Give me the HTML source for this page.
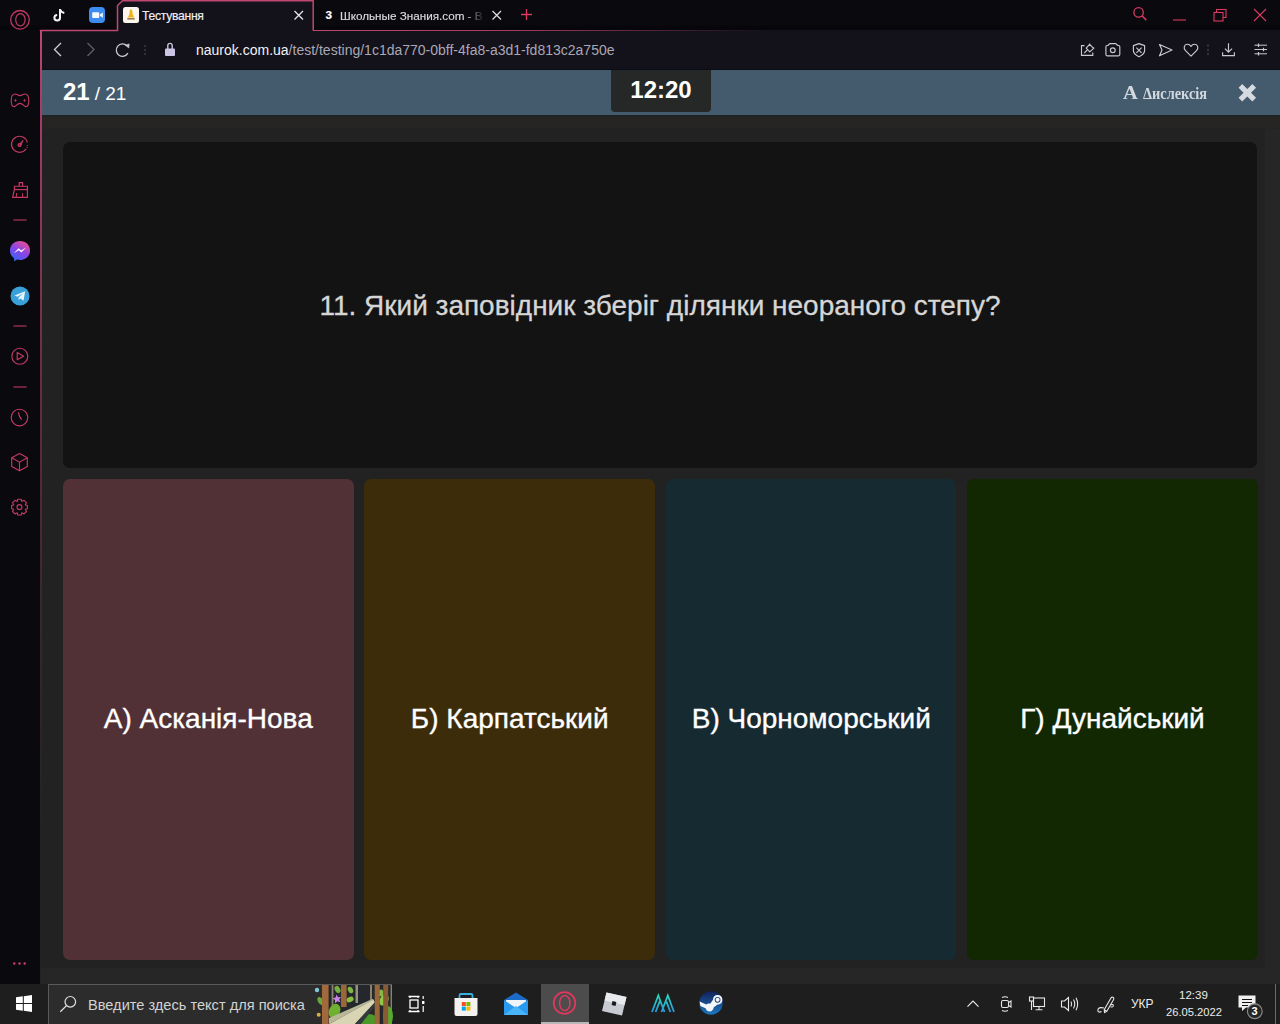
<!DOCTYPE html>
<html><head><meta charset="utf-8">
<style>
*{box-sizing:border-box;margin:0;padding:0}
html,body{width:1280px;height:1024px;overflow:hidden;background:#232323;font-family:"Liberation Sans",sans-serif}
.abs{position:absolute}
svg{position:absolute;overflow:visible}
#tabbar{left:0;top:0;width:1280px;height:30px;background:linear-gradient(#0a090e 0,#0a090e 25px,#07070b 26px,#07070b 30px)}
#addr{left:40px;top:30px;width:1240px;height:40px;background:#13111a}
#side{left:0;top:30px;width:40px;height:954px;background:#0a090d}

#header{left:41px;top:70px;width:1239px;height:45px;background:#445b6e}
#content{left:41px;top:115px;width:1239px;height:869px;background:#262626}
#qbox{left:63px;top:142px;width:1194px;height:326px;background:#131313;border-radius:7px}
.card{top:479px;height:481px;width:290.5px;border-radius:7px;display:flex;align-items:center;justify-content:center;color:#fff;font-size:28px;padding-bottom:2px;-webkit-text-stroke:0.35px #fff}
#taskbar{left:0;top:984px;width:1280px;height:40px;background:#1e1e1e}
.tabtxt{font-size:11.5px;color:#e8e8ee;white-space:nowrap;line-height:14px;-webkit-text-stroke:0.15px currentColor}
</style></head><body>
<div id="tabbar" class="abs"></div>
<div id="addr" class="abs"></div>
<div class="abs" style="left:41px;top:68.5px;width:1239px;height:1.5px;background:#080d16"></div>
<div id="side" class="abs"></div>
<div id="header" class="abs"></div>
<div id="content" class="abs"></div>
<div class="abs" style="left:41px;top:115px;width:1224px;height:853px;background:#222222"></div>
<div class="abs" style="left:41px;top:115px;width:1239px;height:14px;background:linear-gradient(#1d2124 0,#1d2124 1px,#272523 2px,#262422 12px,#232323 14px)"></div>

<div class="abs" style="left:40px;top:30px;width:2px;height:954px;background:linear-gradient(#bd4870 0,#a8406a 60px,#642c42 370px,#3c2630 570px,rgba(40,30,35,0) 800px)"></div>
<div class="abs" style="left:313px;top:29.5px;width:460px;height:1.5px;background:linear-gradient(90deg,#bd4870 0,#a83a60 200px,rgba(120,40,70,0) 450px)"></div>
<!-- active tab -->
<div class="abs" style="left:118px;top:1px;width:195px;height:30px;background:#13111a;clip-path:polygon(5px 0,100% 0,100% 100%,0 100%,0 5px)"></div>
<svg width="1280" height="40" style="left:0;top:0">
  <path d="M40.5 31 L40.5 30.5 L117.5 30.5 L117.5 5.5 L122.5 0.8 L313.2 0.8 L313.2 30.5" fill="none" stroke="#bd4870" stroke-width="1.5"/>
  <!-- opera logo -->
  <circle cx="20" cy="19.8" r="9.3" fill="none" stroke="#c33a62" stroke-width="1.3"/>
  <ellipse cx="20.4" cy="19.8" rx="4.7" ry="6.1" fill="none" stroke="#c33a62" stroke-width="1.2"/>
  <!-- tiktok -->
  <path d="M60 9 L60 17.8 A2.8 2.8 0 1 1 57.2 15" fill="none" stroke="#f4f4f4" stroke-width="2"/>
  <path d="M60 9.3 Q60.8 12.3 64.3 13" fill="none" stroke="#f4f4f4" stroke-width="1.9"/>
  <!-- zoom -->
  <rect x="89" y="7" width="16" height="16" rx="4" fill="#3d8cf0"/>
  <rect x="92.2" y="12.2" width="7" height="5.8" rx="0.8" fill="#f4f8ff"/>
  <path d="M99.8 14.4 L102.8 12.4 L102.8 17.8 L99.8 15.8 Z" fill="#f4f8ff"/>
  <!-- naurok favicon -->
  <rect x="123" y="7" width="16" height="16" rx="2.5" fill="#fbf6ee"/>
  <path d="M131 9.3 C130 9.3 129.6 11 129.4 13.5 C129.2 15.5 128.2 16.8 127.4 17.6 L134.6 17.6 C133.8 16.8 132.8 15.5 132.6 13.5 C132.4 11 132 9.3 131 9.3Z" fill="#f0b418"/>
  <rect x="127.3" y="18.2" width="7.4" height="1.3" fill="#8a6428"/>
  <!-- close active -->
  <path d="M294.5 11 L303 19.5 M303 11 L294.5 19.5" stroke="#e6e6ea" stroke-width="1.3"/>
  <!-- close inactive -->
  <path d="M492.5 11 L501 19.5 M501 11 L492.5 19.5" stroke="#dcdce0" stroke-width="1.3"/>
  <!-- plus -->
  <path d="M526.5 9 L526.5 20 M521 14.5 L532 14.5" stroke="#d83a62" stroke-width="1.3"/>
  <!-- window controls -->
  <circle cx="1138.6" cy="12.4" r="4.7" fill="none" stroke="#d83a62" stroke-width="1.3"/>
  <path d="M1142 15.8 L1146.3 20.1" stroke="#d83a62" stroke-width="1.5"/>
  <path d="M1173 20 L1186 20" stroke="#d83a62" stroke-width="1.1"/>
  <rect x="1216.5" y="9.5" width="9.5" height="8" fill="none" stroke="#d83a62" stroke-width="1.1"/>
  <rect x="1214" y="12.5" width="9" height="8.5" fill="#0a090e" stroke="#d83a62" stroke-width="1.1"/>
  <path d="M1254 9 L1266 21 M1266 9 L1254 21" stroke="#d83a62" stroke-width="1.1"/>
</svg>
<div class="abs tabtxt" style="left:142px;top:8.8px;font-size:12.2px;letter-spacing:-0.3px;color:#f0f0f4">Тестування</div>
<div class="abs" style="left:325.3px;top:6.2px;font-size:14px;line-height:16px;font-weight:700;color:#fff">з</div>
<div class="abs tabtxt" style="left:340px;top:8.5px;font-size:11.7px;color:#dcdce0;width:145px;overflow:hidden;-webkit-mask-image:linear-gradient(90deg,#000 85%,transparent 100%)">Школьные Знания.com - В</div>

<!-- address bar -->
<svg width="1280" height="70" style="left:0;top:0">
  <path d="M61 43 L54.5 49.5 L61 56" fill="none" stroke="#c9c9d2" stroke-width="1.4"/>
  <path d="M87.5 43 L94 49.5 L87.5 56" fill="none" stroke="#5c5c66" stroke-width="1.4"/>
  <path d="M127.9 53.2 A6.2 6.2 0 1 1 126.9 45.7" fill="none" stroke="#c9c9d2" stroke-width="1.3"/>
  <path d="M125.3 45.2 L129.2 43.9 L128.8 47.9 Z" fill="#c9c9d2" stroke="#c9c9d2" stroke-width="0.6" stroke-linejoin="round"/>
  <circle cx="145" cy="46" r="1" fill="#3c3b46"/>
  <circle cx="145" cy="50" r="1" fill="#3c3b46"/>
  <circle cx="145" cy="54" r="1" fill="#3c3b46"/>
  <path d="M167.8 49 L167.8 45.6 A2.2 2.2 0 0 1 172.2 45.6 L172.2 49" fill="none" stroke="#cdc5e6" stroke-width="1.4"/>
  <rect x="165" y="48.5" width="10" height="7.5" rx="1" fill="#cdc5e6"/>
</svg>
<div class="abs" style="left:196px;top:41px;font-size:14px;line-height:18px;white-space:nowrap;color:#aaa8b4"><span style="color:#f2f2f5">naurok.com.ua</span>/test/testing/1c1da770-0bff-4fa8-a3d1-fd813c2a750e</div>

<!-- address right icons -->
<svg width="1280" height="70" style="left:0;top:0" fill="none" stroke="#c9c9d2" stroke-width="1.15">
  <path d="M1084.5 45.6 L1081.5 45.6 L1081.5 55.4 L1092.8 55.4 L1092.8 52.5"/>
  <path d="M1084.3 53 L1087.6 49.7"/>
  <path d="M1086.2 48.2 L1089.6 44.3 L1093.6 48.3 L1089.8 51.8 Z M1089.6 44.3 L1090.2 43.6 M1093.6 48.3 L1094.2 47.7" stroke-linejoin="round"/>
  <path d="M1107.8 45.5 L1109.8 43.6 L1115.8 43.6 L1117.8 45.5 L1118.6 45.5 Q1119.8 45.5 1119.8 46.7 L1119.8 54.6 Q1119.8 55.8 1118.6 55.8 L1107.1 55.8 Q1105.9 55.8 1105.9 54.6 L1105.9 46.7 Q1105.9 45.5 1107.1 45.5 Z" stroke-linejoin="round"/>
  <circle cx="1112.8" cy="50.2" r="2.4"/>
  <path d="M1139 43.6 L1144.6 45.6 L1144.6 50.6 C1144.6 53.6 1142 55.4 1139 56.8 C1136 55.4 1133.4 53.6 1133.4 50.6 L1133.4 45.6 Z" stroke-linejoin="round"/>
  <path d="M1136.4 47.6 L1141.6 52.8 M1141.6 47.6 L1136.4 52.8"/>
  <path d="M1159.5 44.5 L1172 50 L1159.5 55.8 L1162 50 Z" stroke-linejoin="round"/>
  <path d="M1191 56.2 L1185.5 50.7 C1183.2 48.4 1184 44.5 1187.3 44.3 C1189 44.2 1190.3 45.3 1191 46.5 C1191.7 45.3 1193 44.2 1194.7 44.3 C1198 44.5 1198.8 48.4 1196.5 50.7 Z" stroke-linejoin="round"/>
  <path d="M1228.5 43.2 L1228.5 52 M1224.9 48.6 L1228.5 52.2 L1232.1 48.6 M1222.6 52.3 L1222.6 55.6 L1234.4 55.6 L1234.4 52.3"/>
  <path d="M1254.5 45.2 L1267 45.2 M1254.5 49.5 L1267 49.5 M1254.5 53.8 L1267 53.8" stroke-width="1"/>
  <path d="M1258.5 43.4 L1258.5 47 M1263.5 47.7 L1263.5 51.3 M1258.5 52 L1258.5 55.6" stroke-width="1.2"/>
</svg>
<svg width="10" height="20" style="left:1203px;top:40px"><circle cx="5" cy="5.6" r="1.1" fill="#3c3b46"/><circle cx="5" cy="9.8" r="1.1" fill="#3c3b46"/><circle cx="5" cy="14" r="1.1" fill="#3c3b46"/></svg>

<!-- sidebar -->
<svg width="40" height="980" style="left:0;top:0" fill="none" stroke="#c43a62" stroke-width="1.15">
  <path d="M15 94 C17 94 18 95.6 20 95.6 C22 95.6 23 94 25 94 C28 94 28.8 97.5 28.8 100.5 C28.8 104 27.8 106.6 25.8 106.6 C23.8 106.6 22.8 103.3 20 103.3 C17.2 103.3 16.2 106.6 14.2 106.6 C12.2 106.6 11.2 104 11.2 100.5 C11.2 97.5 12 94 15 94 Z" stroke-linejoin="round"/>
  <path d="M15.4 99.2 L15.4 101.6 M14.2 100.4 L16.6 100.4 M24.6 99.2 L24.6 101.6 M23.4 100.4 L25.8 100.4" stroke-width="0.9"/>
  <path d="M27.3 142.5 A8 8 0 1 0 26.2 148.7" />
  <circle cx="27.3" cy="145.6" r="0.55" fill="#c43a62" stroke="none"/>
  <circle cx="27.1" cy="147.4" r="0.55" fill="#c43a62" stroke="none"/>
  <path d="M18.3 145.3 L23 140.3 L20.6 146.6 Z" fill="#c43a62" stroke-width="0.8" stroke-linejoin="round"/>
  <circle cx="19.4" cy="145" r="1.9" fill="#c43a62" stroke="none"/>
  <circle cx="19.4" cy="145" r="0.6" fill="#0a090d" stroke="none"/>
  <path d="M19.2 186.2 L19.2 182.6 L22.6 182.6 L22.6 186.2"/>
  <path d="M14.4 186.2 L27.4 186.2 L27.4 197.4 L12.6 197.4 L14.4 189.4 Z" stroke-linejoin="round"/>
  <path d="M14.4 189.6 L27.4 189.6"/>
  <path d="M16.6 193 L16.2 197.4 M22.6 193.2 L22.6 197.4" stroke-width="1"/>
  <path d="M13.5 220 L26.5 220" stroke-width="1.1"/>
  <path d="M13.5 326 L26.5 326" stroke-width="1.1"/>
  <path d="M13.5 387 L26.5 387" stroke-width="1.1"/>
  <circle cx="19.8" cy="356.2" r="8"/>
  <path d="M17.2 352.6 L23.6 356.2 L17.2 359.8 Z" stroke-linejoin="round"/>
  <circle cx="19.5" cy="417.5" r="8.3"/>
  <path d="M18.3 412.4 C18.8 415 19.6 417.2 21.6 419.6" stroke-width="1.2"/>
  <path d="M19.5 453.6 L27.3 457.8 L27.3 466.4 L19.5 470.8 L11.7 466.4 L11.7 457.8 Z" stroke-linejoin="round"/>
  <path d="M11.7 457.8 L19.5 462.2 L27.3 457.8 M19.5 462.2 L19.5 470.8"/>
  <path d="M17.8 499.2 L21.2 499.2 L21.8 501.4 L24 500.3 L26.4 502.7 L25.3 504.9 L27.4 505.5 L27.4 508.7 L25.3 509.3 L26.4 511.5 L24 513.9 L21.8 512.8 L21.2 515 L17.8 515 L17.2 512.8 L15 513.9 L12.6 511.5 L13.7 509.3 L11.6 508.7 L11.6 505.5 L13.7 504.9 L12.6 502.7 L15 500.3 L17.2 501.4 Z" stroke-linejoin="round"/>
  <circle cx="19.5" cy="507.1" r="2.5"/>
  <circle cx="14.3" cy="963.5" r="1.2" fill="#d03a64" stroke="none"/>
  <circle cx="19.5" cy="963.5" r="1.2" fill="#d03a64" stroke="none"/>
  <circle cx="24.7" cy="963.5" r="1.2" fill="#d03a64" stroke="none"/>
</svg>
<svg width="40" height="320" style="left:0;top:0">
  <defs>
    <linearGradient id="msg" x1="0.2" y1="1" x2="0.8" y2="0"><stop offset="0" stop-color="#2f6af5"/><stop offset="0.5" stop-color="#8a44e8"/><stop offset="1" stop-color="#f0508a"/></linearGradient>
  </defs>
  <path d="M20 241 C25.8 241 30 245 30 250.5 C30 256 25.8 260 20 260 C19 260 18 259.9 17.1 259.6 L14.2 261.2 L14 258.2 C11.5 256.4 10 253.7 10 250.5 C10 245 14.2 241 20 241 Z" fill="url(#msg)"/>
  <path d="M13.8 253.2 L18.6 248.2 L21.2 250.5 L26.2 247.5 L21.4 252.6 L18.8 250.3 Z" fill="#fff"/>
  <circle cx="20" cy="296" r="9.5" fill="#3aa0d8"/>
  <path d="M14.5 295.5 L25.2 291.3 L23.5 300.8 L20.4 298.4 L18.6 300.1 L18.5 297.4 L23.2 293.2 L17.4 296.8 Z" fill="#e8f2fa"/>
</svg>

<!-- header -->
<div class="abs" style="left:63px;top:78px;color:#fff;font-size:24px;font-weight:700;line-height:28px;white-space:nowrap">21<span style="font-size:19px;font-weight:400;margin-left:5px">/ 21</span></div>
<div class="abs" style="left:611px;top:70px;width:100px;height:42px;background:#262828;border-radius:0 0 4px 4px;color:#fff;font-size:24px;font-weight:700;text-align:center;line-height:40px">12:20</div>
<div class="abs" style="left:1123px;top:82px;color:#d3d8de;font-family:'Liberation Serif',serif;font-weight:700;font-size:19px;line-height:22px;white-space:nowrap;transform:scaleX(1.08);transform-origin:0 0">А</div>
<div class="abs" style="left:1142.5px;top:84px;color:#d3d8de;font-family:'Liberation Serif',serif;font-weight:700;font-size:16.5px;line-height:20px;white-space:nowrap;transform:scaleX(0.87);transform-origin:0 0">Δислексія</div>
<svg width="20" height="20" style="left:1237px;top:83px">
  <path d="M3.4 2.9 L17.2 16.7 M17.2 2.9 L3.4 16.7" stroke="#d5dadf" stroke-width="5.2" stroke-linecap="butt"/>
</svg>

<div id="qbox" class="abs"></div>
<div class="abs" style="left:63px;top:290px;width:1194px;text-align:center;color:#d6d6d6;font-size:28px;line-height:32px;-webkit-text-stroke:0.3px #d6d6d6">11. Який заповідник зберіг ділянки неораного степу?</div>
<div class="card abs" style="left:63px;width:290.5px;background:#513136">А) Асканія-Нова</div>
<div class="card abs" style="left:364.2px;width:291px;background:#3c2c0a">Б) Карпатський</div>
<div class="card abs" style="left:666.4px;width:289.8px;background:#162a31">В) Чорноморський</div>
<div class="card abs" style="left:967.3px;width:290.3px;background:#122802">Г) Дунайський</div>

<div id="taskbar" class="abs"></div>
<div class="abs" style="left:48px;top:984px;width:344px;height:40px;background:#2c2c2c;border-top:1px solid #5a5a5a;border-left:1px solid #5a5a5a"></div>
<div class="abs" style="left:88px;top:996px;font-size:14.6px;line-height:18px;color:#d2d2d2;white-space:nowrap">Введите здесь текст для поиска</div>
<div class="abs" style="left:541px;top:984px;width:48px;height:40px;background:#4c4c4c"></div>
<div class="abs" style="left:541px;top:1022px;width:48px;height:2px;background:#b8b8b8"></div>
<svg width="1280" height="40" style="left:0;top:984px">
  <!-- windows logo -->
  <path d="M16 13.2 L22.8 12.3 L22.8 19 L16 19 Z M23.8 12.2 L32 11 L32 19 L23.8 19 Z M16 20 L22.8 20 L22.8 26.7 L16 25.8 Z M23.8 20 L32 20 L32 28 L23.8 26.8 Z" fill="#fff"/>
  <!-- search icon -->
  <circle cx="70.3" cy="17.8" r="5.3" fill="none" stroke="#e0e0e0" stroke-width="1.2"/>
  <path d="M66.5 21.6 L60.3 27.8" stroke="#e0e0e0" stroke-width="1.3"/>
  <!-- forest image -->
  <rect x="322" y="1" width="70" height="39" fill="#24282c"/>
  <rect x="331.6" y="1" width="1.8" height="22" fill="#8a8070"/>
  <rect x="355.5" y="1" width="2.5" height="18" fill="#9a9080"/>
  <rect x="370" y="1" width="2" height="16" fill="#8a8070"/>
  <rect x="390.6" y="1" width="1.4" height="39" fill="#8a8070"/>
  <ellipse cx="320.5" cy="17" rx="2.6" ry="4.2" fill="#6aa838" transform="rotate(-30 320.5 17)"/>
  <ellipse cx="337.5" cy="5.5" rx="2.6" ry="3.8" fill="#78b040" transform="rotate(-30 337.5 5.5)"/>
  <ellipse cx="350.5" cy="6" rx="2.4" ry="3.5" fill="#80b848" transform="rotate(-30 350.5 6)"/>
  <ellipse cx="350" cy="15.5" rx="3.8" ry="2.6" fill="#88c040" transform="rotate(-25 350 15.5)"/>
  <ellipse cx="334.5" cy="27" rx="5.5" ry="7.5" fill="#70b030" transform="rotate(25 334.5 27)"/>
  <ellipse cx="384" cy="16" rx="4.2" ry="6" fill="#90c848" transform="rotate(30 384 16)"/>
  <ellipse cx="381" cy="9" rx="2.4" ry="3.6" fill="#88b848"/>
  <ellipse cx="369" cy="37" rx="9" ry="7" fill="#4a9a2a"/>
  <ellipse cx="388" cy="32" rx="5" ry="10" fill="#58a830"/>
  <rect x="322" y="1" width="6.6" height="39" fill="#a06a3c"/>
  <rect x="341" y="1" width="5.6" height="22" fill="#9a6838"/>
  <path d="M329 40 L373.5 15.5 L374.8 18.5 L355 40 Z" fill="#d8d4b4"/>
  <path d="M329 40 L329 34 L372.5 15 L373.5 15.8 Z" fill="#b8b898"/>
  <path d="M355 40 L374.8 18.5 L375.5 22 L361 40 Z" fill="#34383a"/>
  <rect x="374.7" y="1" width="5" height="39" fill="#9a6838"/>
  <rect x="383.2" y="1" width="5" height="39" fill="#8a5a32"/>
  <path d="M336.5 10.5 L338 13.2 L341 13 L339.2 15.4 L340.4 18.2 L337.4 17.2 L335 19.2 L335 16 L332.6 14.2 L335.6 13.4Z" fill="#c884e8"/>
  <circle cx="317" cy="6" r="2.2" fill="#80c8d8"/>
  <circle cx="318.7" cy="30.7" r="2" fill="#d8b040"/>
  <!-- task view -->
  <path d="M408.5 12.5 L419.5 12.5 M408.5 27.5 L419.5 27.5" stroke="#fff" stroke-width="1.3"/>
  <rect x="410" y="16" width="8" height="8" fill="none" stroke="#fff" stroke-width="1.3"/>
  <path d="M410 12.5 L410 14 M418 12.5 L418 14 M410 26 L410 27.5 M418 26 L418 27.5" stroke="#fff" stroke-width="1.3"/>
  <rect x="422" y="17" width="2.4" height="3" fill="#fff"/>
  <path d="M423.2 12 L423.2 15 M423.2 22 L423.2 28" stroke="#fff" stroke-width="1.2"/>
  <!-- store -->
  <path d="M459.5 14 L459.5 11.5 Q459.5 10 461 10 L471 10 Q472.5 10 472.5 11.5 L472.5 14" fill="none" stroke="#3ab0e0" stroke-width="1.8"/>
  <path d="M454.5 14 L477.5 14 L477.5 30 Q477.5 32 475.5 32 L456.5 32 Q454.5 32 454.5 30 Z" fill="#f4f2ee"/>
  <rect x="461.8" y="18" width="4" height="4" fill="#f25022"/>
  <rect x="466.4" y="18" width="4" height="4" fill="#7fba00"/>
  <rect x="461.8" y="22.6" width="4" height="4" fill="#00a4ef"/>
  <rect x="466.4" y="22.6" width="4" height="4" fill="#ffb900"/>
  <!-- mail -->
  <path d="M504 16 L516 8.5 L528 16 L528 31 L504 31 Z" fill="#1a6cc8"/>
  <path d="M506 16 L526 16 L526 26 L506 26 Z" fill="#f0f4f8"/>
  <path d="M504 16 L516 24 L528 16 L528 31 L504 31 Z" fill="#2a9af0"/>
  <path d="M504 31 L516 22 L528 31 Z" fill="#4ab4f8"/>
  <!-- opera -->
  <circle cx="564.5" cy="19" r="10.8" fill="none" stroke="#e0385e" stroke-width="1.7"/>
  <ellipse cx="564.8" cy="19" rx="5.2" ry="7.6" fill="none" stroke="#e0385e" stroke-width="1.5"/>
  <!-- roblox -->
  <path d="M606.5 8.5 L626.5 13 L622 31.5 L602 27 Z" fill="#c8ccd2"/>
  <path d="M606.5 8.5 L626.5 13 L624.5 21 L604.5 16.5 Z" fill="#e8eaee"/>
  <rect x="612" y="17.5" width="4" height="4" fill="#1a1a1a" transform="rotate(13 614 19.5)"/>
  <!-- AM -->
  <defs><linearGradient id="amg" x1="0" y1="0" x2="0" y2="1"><stop offset="0" stop-color="#28d8b8"/><stop offset="1" stop-color="#2898e0"/></linearGradient></defs><path d="M652 28 L658.3 11.5 L664.5 28 M661.5 28 L667.8 11.5 L674 28 M655.6 28 L659.8 17.2 M670.4 28 L666.4 17.6" fill="none" stroke="url(#amg)" stroke-width="1.8" stroke-linejoin="miter"/>
  <!-- steam -->
  <defs><linearGradient id="stg" x1="0" y1="0" x2="0" y2="1"><stop offset="0" stop-color="#14205a"/><stop offset="1" stop-color="#1a78c0"/></linearGradient></defs>
  <circle cx="711" cy="19" r="11.8" fill="url(#stg)"/>
  <path d="M699.6 17.6 L706.2 20.4 C707.6 19.6 709 19.4 710.2 19.8 L713 15.8 C713 13 715 11 717.6 11 C720.4 11 722.4 13 722.4 15.8 C722.4 18.4 720.4 20.6 717.6 20.6 L713.6 23.4 C713.6 25.6 711.8 27.4 709.6 27.4 C707.6 27.4 706 26 705.6 24.2 L700.4 22 Z" fill="#f4f6fa"/>
  <circle cx="717.6" cy="15.8" r="2.9" fill="#1a3a78"/>
  <circle cx="717.6" cy="15.8" r="2" fill="#f4f6fa"/>
  <!-- tray -->
  <path d="M967.5 22.6 L973 17 L978.5 22.6" fill="none" stroke="#e8e8e8" stroke-width="1.2"/>
  <rect x="1001.5" y="16.5" width="7" height="7" rx="1.5" fill="none" stroke="#e8e8e8" stroke-width="1.1"/>
  <path d="M1008.5 18.5 L1011 17 L1011 23 L1008.5 21.5" fill="none" stroke="#e8e8e8" stroke-width="1.1"/>
  <path d="M1002 13.5 Q1005 12 1008 13.5 M1002 26.5 Q1005 28 1008 26.5" fill="none" stroke="#e8e8e8" stroke-width="1.1"/>
  <rect x="1033.5" y="14" width="11" height="8.5" fill="none" stroke="#e8e8e8" stroke-width="1.1"/>
  <rect x="1029.5" y="13" width="4" height="4" fill="none" stroke="#e8e8e8" stroke-width="1.1"/>
  <path d="M1031.5 17 L1031.5 26 M1039 22.5 L1039 25.5 M1035.5 25.7 L1042.5 25.7" fill="none" stroke="#e8e8e8" stroke-width="1.1"/>
  <path d="M1061.5 17 L1064.5 17 L1068.5 13.5 L1068.5 26.5 L1064.5 23 L1061.5 23 Z" fill="none" stroke="#e8e8e8" stroke-width="1.1"/>
  <path d="M1071 17.5 Q1072.3 20 1071 22.5 M1073.5 15.5 Q1076 20 1073.5 24.5 M1076 13.8 Q1079.3 20 1076 26.2" fill="none" stroke="#e8e8e8" stroke-width="1.1"/>
  <path d="M1104.2 25.8 L1110.8 14.2 Q1112 12.6 1113.3 13.4 Q1114.4 14.2 1113.5 15.7 L1106.8 27.2 Z M1104.2 25.8 L1104.6 28.6 L1106.8 27.2" fill="none" stroke="#e8e8e8" stroke-width="1.1" stroke-linejoin="round"/>
  <path d="M1104 24 Q1098 22.5 1097.8 26.5 Q1098 29 1101.5 27.6" fill="none" stroke="#e8e8e8" stroke-width="1.1"/>
  <path d="M1110 21 Q1114 19.5 1113.2 22.2 Q1112.5 23.5 1110.5 22.8" fill="none" stroke="#e8e8e8" stroke-width="1.1"/>
  <!-- notification -->
  <path d="M1238.5 11.5 L1255.5 11.5 L1255.5 23.5 L1246 23.5 L1242 27 L1242 23.5 L1238.5 23.5 Z" fill="#f0f0f0"/>
  <path d="M1242 15.5 L1252 15.5 M1242 18.5 L1252 18.5 M1242 21.5 L1248 21.5" stroke="#111" stroke-width="1.1"/>
  <circle cx="1254.8" cy="27.3" r="7.4" fill="#252525" stroke="#8a8a8a" stroke-width="1.2"/>
  <path d="M1275.5 0 L1275.5 40" stroke="#6a6a6a" stroke-width="1"/>
</svg>
<div class="abs" style="left:1131px;top:997px;font-size:12px;line-height:14px;color:#ececec">УКР</div>
<div class="abs" style="left:1179px;top:988px;font-size:11.5px;line-height:14px;color:#ececec">12:39</div>
<div class="abs" style="left:1166px;top:1005px;font-size:11.2px;line-height:14px;color:#ececec">26.05.2022</div>
<div class="abs" style="left:1251.5px;top:1005px;font-size:11px;line-height:12px;color:#fff;font-weight:700">3</div>
</body></html>
